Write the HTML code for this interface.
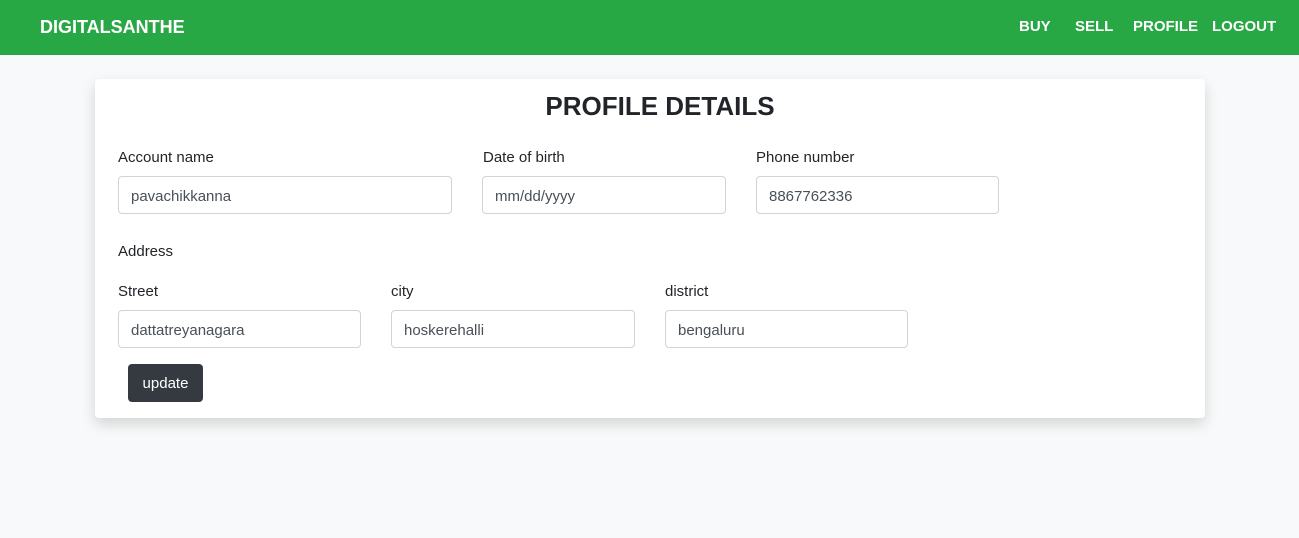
<!DOCTYPE html>
<html><head><style>
*{box-sizing:border-box;margin:0;padding:0}
body{width:1299px;height:538px;background:#f8f9fa;font-family:"Liberation Sans",sans-serif;position:relative;overflow:hidden;color:#212529}
.nav{position:absolute;left:0;top:0;width:1299px;height:55px;background:#28a745}
.nav span{position:absolute;top:18px;color:#fff;font-weight:bold;font-size:15px}
.card{position:absolute;left:95px;top:79px;width:1110px;height:339px;background:#fff;border-radius:4px;box-shadow:0 6px 14px rgba(0,0,0,.15)}
h1{position:absolute;top:91px;left:0;width:1320px;text-align:center;font-size:26px;font-weight:bold}
.l{position:absolute;font-size:15px}
.i{position:absolute;height:38px;border:1px solid #ced4da;border-radius:4px;font-size:15px;color:#495057;padding:11px 12px 0}
.btn{position:absolute;left:128px;top:364px;width:75px;height:38px;background:#343a40;color:#fff;border-radius:4px;font-size:15px;text-align:center;line-height:40px}
</style></head><body>
<div class="nav"><span style="left:40px;font-size:18px;top:17px">DIGITALSANTHE</span><span style="left:1019px">BUY</span><span style="left:1075px">SELL</span><span style="left:1133px">PROFILE</span><span style="left:1212px">LOGOUT</span></div>
<div class="card"></div>
<h1>PROFILE DETAILS</h1>
<div class="l" style="left:118px;top:149px">Account name</div>
<div class="l" style="left:483px;top:149px">Date of birth</div>
<div class="l" style="left:756px;top:149px">Phone number</div>
<div class="i" style="left:118px;top:176px;width:334px">pavachikkanna</div>
<div class="i" style="left:482px;top:176px;width:244px">mm/dd/yyyy</div>
<div class="i" style="left:756px;top:176px;width:243px">8867762336</div>
<div class="l" style="left:118px;top:243px">Address</div>
<div class="l" style="left:118px;top:283px">Street</div>
<div class="l" style="left:391px;top:283px">city</div>
<div class="l" style="left:665px;top:283px">district</div>
<div class="i" style="left:118px;top:310px;width:243px">dattatreyanagara</div>
<div class="i" style="left:391px;top:310px;width:244px">hoskerehalli</div>
<div class="i" style="left:665px;top:310px;width:243px">bengaluru</div>
<div class="btn">update</div>
</body></html>
